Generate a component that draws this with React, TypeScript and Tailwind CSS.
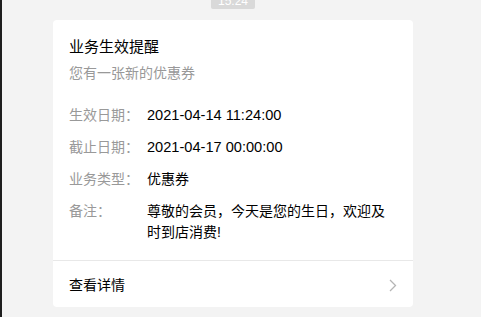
import React from "react";

const font = { fontFamily: '"Liberation Sans", "Noto Sans CJK SC", sans-serif' };

export default function App() {
  const rows: [string, string, string][] = [
    ["生效日期：", "2021-04-14 11:24:00", "text-[14.6px]"],
    ["截止日期：", "2021-04-17 00:00:00", "text-[14.6px]"],
    ["业务类型：", "优惠券", "text-[14px]"],
    ["备注：", "尊敬的会员，今天是您的生日，欢迎及时到店消费!", "text-[14px]"],
  ];
  return (
    <div className="flex h-[317px] w-[481px] overflow-hidden bg-[#f3f3f3]" style={font}>
      <div className="w-[2px] shrink-0 bg-[#1e1e1e]" />
      <div className="relative flex-1">
        <div className="absolute left-[209px] top-[-8px] flex h-[17px] w-[44px] items-center justify-center rounded-[2px] bg-[#d9d9d9] text-[12px] leading-none text-white">
          15:24
        </div>
        <div className="ml-[51px] mt-[20px] w-[360px] rounded-[4px] bg-white">
          <div className="px-4 pt-[16px]">
            <div className="text-[15px] leading-[22px] text-black">业务生效提醒</div>
            <div className="mt-[5px] text-[14px] leading-[20px] text-[#999]">您有一张新的优惠券</div>
            <div className="mt-[22px] flex flex-col gap-[11px] pb-[17px]">
              {rows.map(([k, v, c]) => (
                <div key={k} className="flex text-[14px] leading-[21px]">
                  <div className="w-[78px] shrink-0 text-[#999]">{k}</div>
                  <div className={`flex-1 text-black ${c}`}>{v}</div>
                </div>
              ))}
            </div>
          </div>
          <div className="flex h-[47px] items-center justify-between border-t border-[#e8e8e8] pl-4 pr-[16px] text-[14px] text-black">
            <span className="mt-[2px]">查看详情</span>
            <svg width="8" height="13" viewBox="0 0 8 13" fill="none" className="mt-[2px]">
              <path d="M1 1l5.5 5.5L1 12" stroke="#b5b5b5" strokeWidth="1.3" />
            </svg>
          </div>
        </div>
      </div>
    </div>
  );
}
